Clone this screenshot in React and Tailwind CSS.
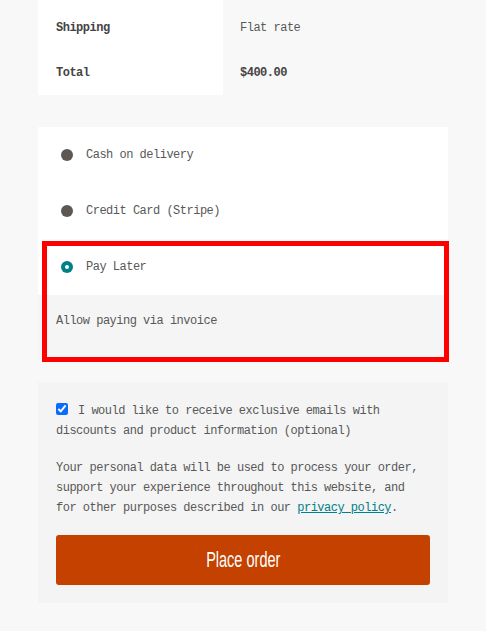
const mono = { fontFamily: '"Liberation Mono", "DejaVu Sans Mono", monospace' };

function Radio({ checked }) {
  if (checked) {
    return (
      <span className="flex h-[12px] w-[12px] items-center justify-center rounded-full bg-[#00808a]">
        <span className="h-[4px] w-[4px] rounded-full bg-white" />
      </span>
    );
  }
  return <span className="h-[12px] w-[12px] rounded-full bg-[#5e5855]" />;
}

function Method({ label, checked }) {
  return (
    <div className="flex h-[56px] items-center gap-[13px] pl-[23px]">
      <Radio checked={checked} />
      <span>{label}</span>
    </div>
  );
}

export default function App() {
  return (
    <div
      className="min-h-[631px] bg-[#f8f8f8] text-[12px] leading-[20px] tracking-[-0.5px] text-[#585858]"
      style={mono}
    >
      {/* totals table */}
      <div className="mx-[38px] flex">
        <div className="w-[185px] bg-white">
          <div className="flex h-[50px] items-center px-[18px] pt-[6px] font-bold text-[#444]">
            Shipping
          </div>
          <div className="flex h-[45px] items-center px-[18px] font-bold text-[#444]">
            Total
          </div>
        </div>
        <div className="flex-1">
          <div className="flex h-[50px] items-center px-[17px] pt-[6px]">Flat rate</div>
          <div className="flex h-[45px] items-center px-[17px] font-bold text-[#444]">
            $400.00
          </div>
        </div>
      </div>

      {/* payment methods */}
      <div className="relative mx-[38px] mt-[32px] bg-white">
        <Method label="Cash on delivery" />
        <Method label="Credit Card (Stripe)" />
        <Method label="Pay Later" checked />
        <div className="flex h-[65px] items-start bg-[#f5f5f5] px-[18px] pt-[16px]">
          Allow paying via invoice
        </div>
        <div className="pointer-events-none absolute left-[4px] right-[-1px] top-[114px] h-[121px] border-[5px] border-[#ff0000]" />
      </div>

      {/* terms + place order */}
      <div className="mx-[38px] mt-[22px] bg-[#f4f4f4] px-[18px] pb-[18px] pt-[19px]">
        <label className="block">
          <input
            type="checkbox"
            defaultChecked
            className="mr-[10px] h-[12px] w-[12px] translate-y-[1px] align-baseline accent-[#0a6cff]"
          />
          I would like to receive exclusive emails with discounts and product information (optional)
        </label>
        <p className="mt-[17px]">
          Your personal data will be used to process your order, support your experience throughout
          this website, and for other purposes described in our{" "}
          <a href="#" className="text-[#00808a] underline">
            privacy policy
          </a>
          .
        </p>
        <button
          type="button"
          className="mt-[17px] flex h-[50px] w-full items-center justify-center rounded-[3px] bg-[#c44100] text-white"
        >
          <span
            className="inline-block scale-x-[0.66] text-[22px] tracking-normal"
            style={{ fontFamily: '"Liberation Sans", "DejaVu Sans", sans-serif' }}
          >
            Place order
          </span>
        </button>
      </div>
    </div>
  );
}
